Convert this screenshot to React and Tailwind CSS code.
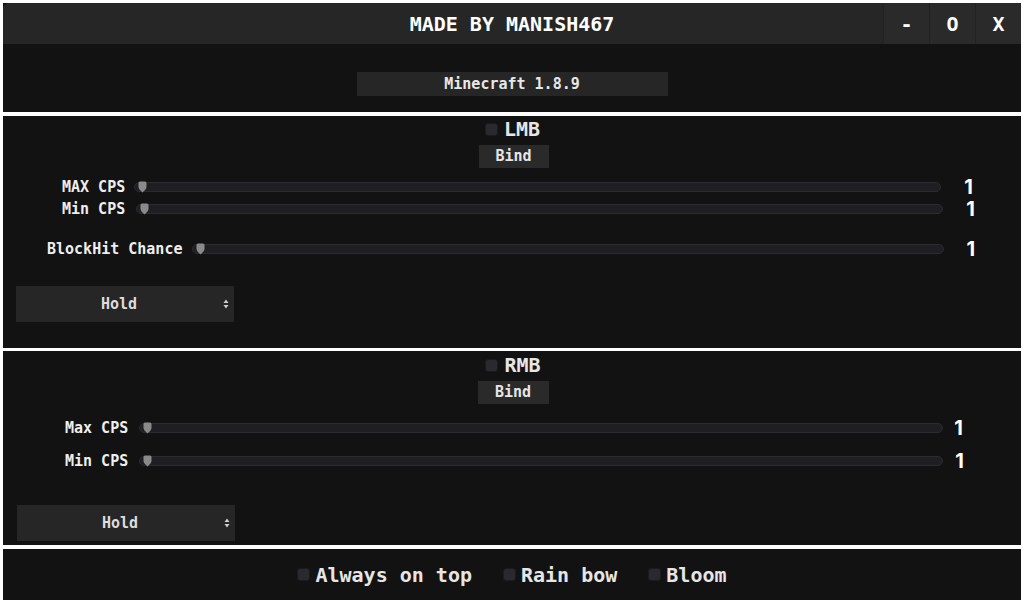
import React from "react";

const mono = { fontFamily: '"DejaVu Sans Mono", monospace' };

const Thumb = () => (
  <svg width="9" height="12" viewBox="0 0 9 12" className="absolute top-1/2 -translate-y-1/2" style={{ left: 3 }}>
    <path d="M0.5 2 Q0.5 0.5 2 0.5 L7 0.5 Q8.5 0.5 8.5 2 L8.5 6 Q8.5 8 4.5 11.5 Q0.5 8 0.5 6 Z" fill="#8a8a8a" />
  </svg>
);

const Slider = ({ className }) => (
  <div className={"relative h-[10px] rounded-full bg-[#1f1f23] border border-[#2b2b30] " + className}>
    <Thumb />
  </div>
);

const Row = ({ label, labelClass, sliderClass, valueClass, rowClass }) => (
  <div className={"flex items-center " + rowClass}>
    <span className={"text-[15px] font-bold text-[#eeeeee] leading-none " + labelClass} style={mono}>{label}</span>
    <Slider className={sliderClass} />
    <span className={"text-[20px] font-bold text-white leading-none " + valueClass} style={{ fontFamily: "Inter, sans-serif" }}>1</span>
  </div>
);

const Check = ({ className }) => (
  <span className={"inline-block w-[13px] h-[13px] rounded-[3px] bg-[#2a2a2e] border border-[#1b1b1e] " + className} />
);

const Select = ({ className }) => (
  <div className={"relative flex items-center justify-center w-[218px] h-[36px] bg-[#262626] pr-[12px] text-[15px] font-bold text-[#dddddd] " + className} style={mono}>
    Hold
    <svg width="6" height="10" viewBox="0 0 6 10" className="absolute right-[5px] top-1/2 -translate-y-1/2">
      <path d="M3 0.5 L5.5 4 L0.5 4 Z M3 9.5 L5.5 6 L0.5 6 Z" fill="#cccccc" />
    </svg>
  </div>
);

export default function App() {
  return (
    <div className="w-[1024px] h-[600px] bg-white flex flex-col pl-[3px] pr-[3px] pt-[3px] gap-[3px] overflow-hidden">
      {/* top panel */}
      <div className="h-[109px] bg-[#121212] flex flex-col">
        <div className="h-[41px] bg-[#262626] rounded-tl-[6px] flex items-center relative">
          <div className="flex-1 text-center text-[20px] font-bold text-white" style={mono}>MADE BY MANISH467</div>
          <div className="absolute right-0 top-0 h-full flex">
            {["-", "O", "X"].map((c) => (
              <div key={c} className="w-[46px] h-full bg-[#2a2a2a] border-l border-[#222222] flex items-center justify-center text-[20px] font-bold text-white" style={mono}>{c}</div>
            ))}
          </div>
        </div>
        <div className="flex justify-center mt-[28px]">
          <div className="w-[311px] h-[24px] bg-[#262626] flex items-center justify-center text-[15px] font-bold text-[#e8e8e8]" style={mono}>Minecraft 1.8.9</div>
        </div>
      </div>

      {/* LMB panel */}
      <div className="h-[232px] bg-[#121212] flex flex-col mt-[1px]">
        <div className="flex items-center justify-center mt-[2px] pl-[1px]">
          <Check className="mr-[6px]" />
          <span className="text-[20px] font-bold text-[#e6e6e6] leading-[22px]" style={mono}>LMB</span>
        </div>
        <div className="flex justify-center mt-[5px] pl-[3px]">
          <div className="w-[70px] h-[23px] bg-[#2a2a2a] flex items-center justify-center text-[15px] font-bold text-[#e6e6e6]" style={mono}>Bind</div>
        </div>
        <Row rowClass="mt-[9px] pl-[59px]" label="MAX CPS" sliderClass="ml-[9px] w-[807px]" valueClass="ml-[23px]" />
        <Row rowClass="mt-[2px] pl-[59px]" label="Min CPS" sliderClass="ml-[11px] w-[807px]" valueClass="ml-[23px]" />
        <Row rowClass="mt-[20px] pl-[44px]" label="BlockHit Chance" sliderClass="ml-[10px] w-[752px]" valueClass="ml-[22px]" />
        <Select className="ml-[13px] mt-[27px]" />
      </div>

      {/* RMB panel */}
      <div className="h-[194px] bg-[#121212] flex flex-col">
        <div className="flex items-center justify-center mt-[3px] pl-[2px]">
          <Check className="mr-[6px]" />
          <span className="text-[20px] font-bold text-[#e6e6e6] leading-[22px]" style={mono}>RMB</span>
        </div>
        <div className="flex justify-center mt-[5px] pl-[2px]">
          <div className="w-[71px] h-[23px] bg-[#2a2a2a] flex items-center justify-center text-[15px] font-bold text-[#e6e6e6]" style={mono}>Bind</div>
        </div>
        <Row rowClass="mt-[14px] pl-[62px]" label="Max CPS" sliderClass="ml-[11px] w-[804px]" valueClass="ml-[11px]" />
        <Row rowClass="mt-[13px] pl-[62px]" label="Min CPS" sliderClass="ml-[11px] w-[804px]" valueClass="ml-[12px]" />
        <Select className="ml-[14px] mt-[34px]" />
      </div>

      {/* bottom panel */}
      <div className="flex-1 bg-[#121212] flex items-center justify-center gap-[31px] mt-[1px]">
        {["Always on top", "Rain bow", "Bloom"].map((t) => (
          <div key={t} className="flex items-center">
            <Check className="mr-[5px]" />
            <span className="text-[20px] font-bold text-[#e6e6e6] leading-none" style={mono}>{t}</span>
          </div>
        ))}
      </div>
    </div>
  );
}
